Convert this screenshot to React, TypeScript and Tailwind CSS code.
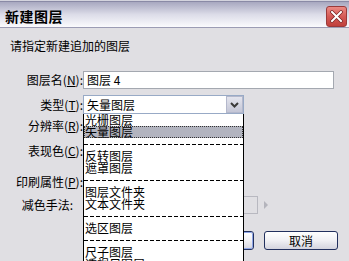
import React from 'react';

const FONT = "font-['Noto_Sans_CJK_SC','Noto_Sans_CJK_JP',sans-serif]";

type ListItem = { label?: string; sep?: boolean; selected?: boolean };

const ITEMS: ListItem[] = [
  { label: '光栅图层' },
  { label: '矢量图层', selected: true },
  { sep: true },
  { label: '反转图层' },
  { label: '遮罩图层' },
  { sep: true },
  { label: '图层文件夹' },
  { label: '文本文件夹' },
  { sep: true },
  { label: '选区图层' },
  { sep: true },
  { label: '尺子图层' },
  { label: '透视尺图层' },
];

function Label({ children, pad = '' }: { children: React.ReactNode; pad?: string }) {
  return (
    <div className={`w-[83px] shrink-0 text-right leading-[18px] whitespace-nowrap ${pad}`}>{children}</div>
  );
}

function XpButton({ children, isDefault }: { children?: React.ReactNode; isDefault?: boolean }) {
  return (
    <div className="w-[74px] h-[19px] rounded-[3px] border border-[#22305e] bg-gradient-to-b from-white via-[#f0f0f4] to-[#d4d4de] flex items-center justify-center">
      <div
        className={`w-full h-full rounded-[2px] flex items-center justify-center leading-[17px] ${
          isDefault ? 'border border-[#8fa6e6]' : ''
        }`}
      >
        {children}
      </div>
    </div>
  );
}

export default function App() {
  return (
    <div className={`w-[349px] h-[261px] overflow-hidden bg-[#e0dfe3] text-[12px] text-black ${FONT}`}>
      {/* title bar */}
      <div className="pt-[1px] bg-[#d4d4de]">
        <div className="h-[26px] border-t border-[#8a8aa6] bg-gradient-to-b from-[#a8a8c0] via-[#dcdce8] to-[#fbfbfd] flex items-center justify-between pl-[5px] pr-[2px]">
          <span className="text-[14px] font-bold leading-[16px] tracking-[0.5px] mt-[2px]">新建图层</span>
          <div className="w-[21px] h-[21px] rounded-[3px] border border-[#9a3a3a] bg-gradient-to-b from-[#ec8a84] via-[#d45a56] to-[#c0403c] flex items-center justify-center mt-[3px]">
            <svg width="13" height="13" viewBox="0 0 13 13">
              <path d="M2 2 L11 11 M11 2 L2 11" stroke="#7a2020" strokeWidth="3.4" strokeLinecap="square" />
              <path d="M2 2 L11 11 M11 2 L2 11" stroke="#ffffff" strokeWidth="2" strokeLinecap="square" />
            </svg>
          </div>
        </div>
      </div>
      <div className="h-[1px] bg-[#9c9cb4]" />

      {/* body */}
      <div className="pt-[11px]">
        <div className="pl-[10px] leading-[14px]">请指定新建追加的图层</div>

        <div className="mt-[18px] flex items-center h-[18px]">
          <Label>
            图层名(<u>N</u>):
          </Label>
          <div className="w-[251px] h-[18px] border border-[#a4a8b0] bg-white pl-[3px] leading-[16px]">图层 4</div>
        </div>

        <div className="relative mt-[6px] flex items-center h-[19px]">
          <Label>
            类型(<u>T</u>):
          </Label>
          <div className="w-[161px] h-[19px] border border-[#98aac6] bg-white flex">
            <div className="flex-1 pl-[3px] leading-[17px]">矢量图层</div>
            <div className="w-[17px] h-[17px] border border-[#b4b8cc] bg-gradient-to-b from-[#e4e5ee] to-[#c4c6d6] flex items-center justify-center">
              <svg width="9" height="6" viewBox="0 0 9 6">
                <path d="M1 1 L4.5 4.5 L8 1" fill="none" stroke="#3a3a3a" strokeWidth="2" />
              </svg>
            </div>
          </div>

          {/* open dropdown list */}
          <div className="absolute left-[83px] top-[19px] w-[161px] h-[160px] bg-white border-x border-b border-black z-10">
            {ITEMS.map((it, i) =>
              it.sep ? (
                <div key={i} className="h-[12px] flex items-center">
                  <div className="w-full h-[1px] mt-[1px] bg-[repeating-linear-gradient(90deg,#000_0_4px,transparent_4px_6px)]" />
                </div>
              ) : (
                <div
                  key={i}
                  className={`h-[12px] leading-[12px] pl-[1px] whitespace-nowrap ${
                    it.selected ? 'bg-[#b2b4bf] outline outline-1 outline-dotted outline-offset-[-1px] outline-[#333]' : ''
                  }`}
                >
                  {it.label}
                </div>
              )
            )}
          </div>
        </div>

        <div className="mt-[3px] flex items-center h-[18px]">
          <Label>
            分辨率(<u>R</u>):
          </Label>
        </div>

        <div className="mt-[7px] flex items-center h-[18px]">
          <Label>
            表现色(<u>C</u>):
          </Label>
        </div>

        <div className="mt-[13px] flex items-center h-[18px]">
          <Label>
            印刷属性(<u>P</u>):
          </Label>
        </div>

        <div className="mt-[5px] flex items-center h-[18px]">
          <Label pad="pr-[10px]">减色手法:</Label>
          <div className="w-[175px] h-[18px] border border-[#b8b8c0]" />
          <svg width="5" height="8" viewBox="0 0 5 8" className="ml-[6px]">
            <path d="M0 0 L4 4 L0 8 Z" fill="#b4b4bc" />
          </svg>
        </div>

        <div className="mt-[17px] flex justify-end gap-[10px] pr-[11px]">
          <XpButton isDefault>确定</XpButton>
          <XpButton>取消</XpButton>
        </div>
      </div>
    </div>
  );
}
